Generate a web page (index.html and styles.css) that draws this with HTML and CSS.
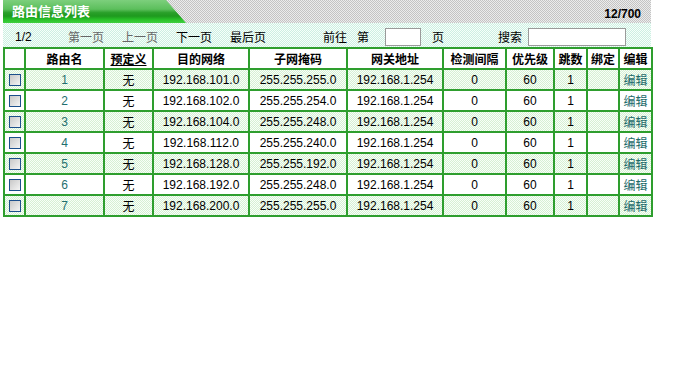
FILE: index.html
```html
<!DOCTYPE html>
<html>
<head>
<meta charset="utf-8">
<link rel="stylesheet" href="styles.css">
</head>
<body>
<div class="wrap">
  <div class="titlebar">
    <div class="tab"><span class="tab-text">路由信息列表</span></div>
    <div class="count">12/700</div>
  </div>
  <div class="toolbar">
    <span class="pg">1/2</span>
    <span class="nav dis first">第一页</span>
    <span class="nav dis">上一页</span>
    <span class="nav">下一页</span>
    <span class="nav">最后页</span>
    <span class="goto">前往</span>
    <span class="di">第</span>
    <span class="box small"></span>
    <span class="ye">页</span>
    <span class="search">搜索</span>
    <span class="box big"></span>
  </div>
  <table class="grid">
    <colgroup>
      <col class="c0"><col class="c1"><col class="c2"><col class="c3"><col class="c4"><col class="c5"><col class="c6"><col class="c7"><col class="c8"><col class="c9"><col class="c10">
    </colgroup>
    <thead>
      <tr>
        <th></th><th>路由名</th><th><u>预定义</u></th><th>目的网络</th><th>子网掩码</th><th>网关地址</th><th>检测间隔</th><th>优先级</th><th>跳数</th><th>绑定</th><th>编辑</th>
      </tr>
    </thead>
    <tbody>
      <tr class="odd"><td><span class="cb"></span></td><td class="name">1</td><td>无</td><td>192.168.101.0</td><td>255.255.255.0</td><td>192.168.1.254</td><td>0</td><td>60</td><td>1</td><td></td><td class="edit">编辑</td></tr>
      <tr><td><span class="cb"></span></td><td class="name">2</td><td>无</td><td>192.168.102.0</td><td>255.255.254.0</td><td>192.168.1.254</td><td>0</td><td>60</td><td>1</td><td></td><td class="edit">编辑</td></tr>
      <tr class="odd"><td><span class="cb"></span></td><td class="name">3</td><td>无</td><td>192.168.104.0</td><td>255.255.248.0</td><td>192.168.1.254</td><td>0</td><td>60</td><td>1</td><td></td><td class="edit">编辑</td></tr>
      <tr><td><span class="cb"></span></td><td class="name">4</td><td>无</td><td>192.168.112.0</td><td>255.255.240.0</td><td>192.168.1.254</td><td>0</td><td>60</td><td>1</td><td></td><td class="edit">编辑</td></tr>
      <tr class="odd"><td><span class="cb"></span></td><td class="name">5</td><td>无</td><td>192.168.128.0</td><td>255.255.192.0</td><td>192.168.1.254</td><td>0</td><td>60</td><td>1</td><td></td><td class="edit">编辑</td></tr>
      <tr><td><span class="cb"></span></td><td class="name">6</td><td>无</td><td>192.168.192.0</td><td>255.255.248.0</td><td>192.168.1.254</td><td>0</td><td>60</td><td>1</td><td></td><td class="edit">编辑</td></tr>
      <tr class="odd"><td><span class="cb"></span></td><td class="name">7</td><td>无</td><td>192.168.200.0</td><td>255.255.255.0</td><td>192.168.1.254</td><td>0</td><td>60</td><td>1</td><td></td><td class="edit">编辑</td></tr>
    </tbody>
  </table>
</div>
</body>
</html>
```
FILE: styles.css
```css
html, body {
  margin: 0;
  padding: 0;
  background: #fff;
}
body {
  font-family: "Liberation Sans", "Noto Sans CJK SC", sans-serif;
  font-size: 12px;
  color: #000;
}
.wrap {
  margin-left: 3px;
  width: 648px;
}
.titlebar {
  height: 23px;
  display: flex;
  justify-content: space-between;
  align-items: center;
  background: repeating-conic-gradient(#c4c4c4 0 25%, #ececec 0 50%) 0 0 / 2px 2px;
}
.tab {
  align-self: stretch;
  width: 183px;
  clip-path: polygon(0 0, 163px 0, 183px 100%, 0 100%);
  background: linear-gradient(#7ccf7c 0, #5cbf5c 40%, #2aa02a 55%, #1e9a1e 70%, #28c028 85%, #3fd03f 100%);
  display: flex;
  align-items: center;
}
.tab-text {
  color: #fff;
  font-weight: bold;
  font-size: 13px;
  padding-left: 9px;
  margin-top: -2px;
}
.count {
  font-weight: bold;
  padding-right: 10px;
  margin-top: 4px;
}
.toolbar {
  height: 24px;
  padding-top: 3px;
  box-sizing: border-box;
  display: flex;
  align-items: center;
  background: repeating-conic-gradient(#cdeee2 0 25%, #f6fffa 0 50%) 0 0 / 2px 2px;
}
.pg { margin-left: 12px; width: 53px; }
.nav { width: 54px; }
.nav.dis { color: #666; }
.goto { margin-left: 39px; width: 34px; }
.di { width: 28px; }
.box {
  display: block;
  height: 18px;
  background: #fff;
  border: 1px solid #9a9a9a;
  box-sizing: border-box;
}
.box.small { width: 36px; margin-right: 11px; }
.ye { width: 66px; }
.search { width: 30px; }
.box.big { width: 98px; }

.grid {
  border-collapse: collapse;
  width: 648px;
  table-layout: fixed;
}
.grid th, .grid td {
  border: 2px solid #2e9e2e;
  height: 19px;
  padding: 0;
  text-align: center;
  white-space: nowrap;
}
.grid th {
  font-weight: bold;
  background: #fff;
}
.grid th u {
  text-decoration: underline;
}
.grid tr.odd td {
  background: repeating-conic-gradient(#d6efd4 0 25%, #f8fff8 0 50%) 0 0 / 2px 2px;
}
.c0 { width: 21px; }
.c1 { width: 79px; }
.c2 { width: 49px; }
.c3 { width: 96px; }
.c4 { width: 98px; }
.c5 { width: 96px; }
.c6 { width: 63px; }
.c7 { width: 48px; }
.c8 { width: 33px; }
.c9 { width: 32px; }
.c10 { width: 33px; }
.name { color: #1f6f6f; }
.edit { color: #1a6a6a; }
.cb {
  display: block;
  margin: 0 auto;
  width: 12px;
  height: 12px;
  box-sizing: border-box;
  border: 1px solid #1c4f8c;
  background: linear-gradient(135deg, #c8c8c8, #f4f4f4);
}
```
